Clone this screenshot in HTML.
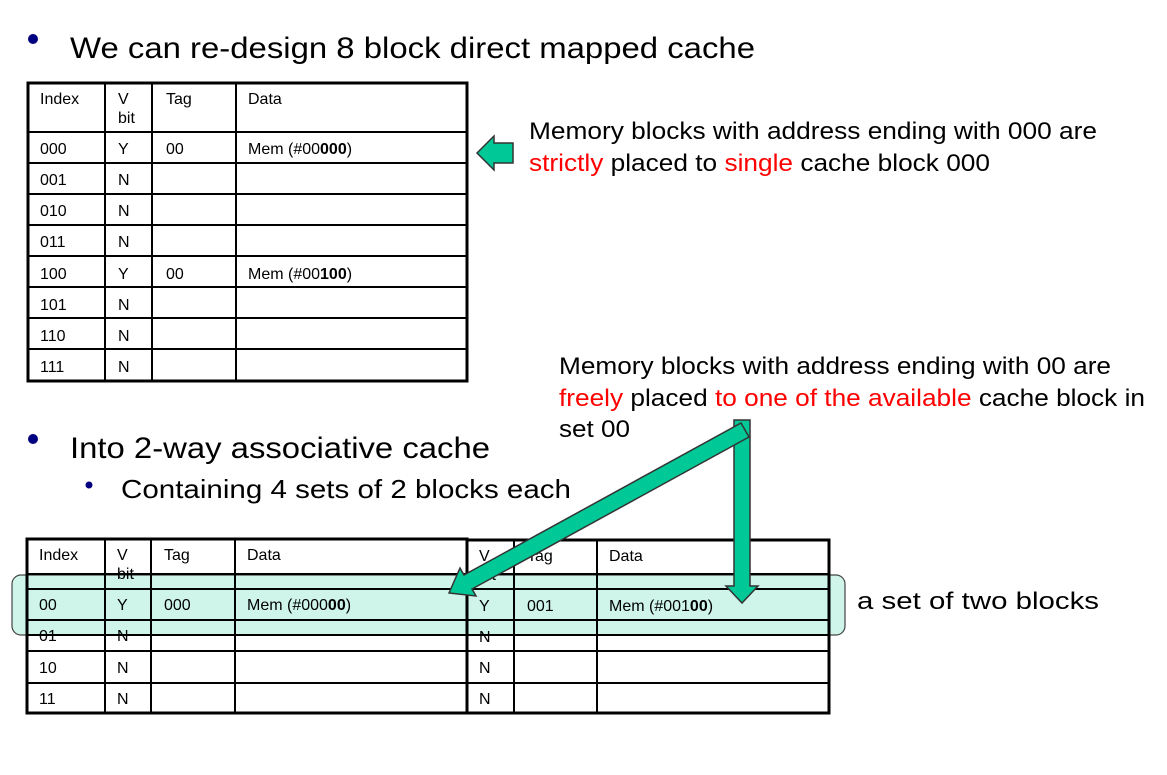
<!DOCTYPE html>
<html><head><meta charset="utf-8"><style>
html,body{margin:0;padding:0;background:#fff;}
body{width:1167px;height:775px;position:relative;overflow:hidden;font-family:"Liberation Sans",Arial,sans-serif;}
svg{position:absolute;left:0;top:0;}
</style></head><body>
<svg width="1167" height="775" viewBox="0 0 1167 775" font-family="Liberation Sans, Arial, sans-serif">
<!-- bullets -->
<circle cx="33" cy="39" r="5" fill="#000080"/>
<text x="70" y="58" font-size="30" textLength="685" lengthAdjust="spacingAndGlyphs">We can re-design 8 block direct mapped cache</text>
<circle cx="33" cy="439" r="5" fill="#000080"/>
<text x="70" y="458" font-size="30" textLength="420" lengthAdjust="spacingAndGlyphs">Into 2-way associative cache</text>
<circle cx="89" cy="485" r="3.5" fill="#000080"/>
<text x="121" y="498" font-size="26" textLength="450" lengthAdjust="spacingAndGlyphs">Containing 4 sets of 2 blocks each</text>

<!-- top table -->
<g stroke="#000" fill="none">
<rect x="28" y="83" width="439" height="298" stroke-width="3"/>
<g stroke-width="2">
<line x1="105" y1="83" x2="105" y2="381"/><line x1="152" y1="83" x2="152" y2="381"/><line x1="236" y1="83" x2="236" y2="381"/>
<line x1="28" y1="132" x2="467" y2="132"/><line x1="28" y1="163" x2="467" y2="163"/><line x1="28" y1="194" x2="467" y2="194"/>
<line x1="28" y1="225" x2="467" y2="225"/><line x1="28" y1="256" x2="467" y2="256"/><line x1="28" y1="287" x2="467" y2="287"/>
<line x1="28" y1="318" x2="467" y2="318"/><line x1="28" y1="349" x2="467" y2="349"/>
</g></g>
<g font-size="16">
<text x="40" y="104">Index</text><text x="118" y="104">V</text><text x="118" y="123">bit</text><text x="166" y="104">Tag</text><text x="248" y="104">Data</text>
<text x="40" y="154">000</text><text x="118" y="154">Y</text><text x="166" y="154">00</text><text x="248" y="154">Mem (#00<tspan font-weight="bold">000</tspan>)</text>
<text x="40" y="185">001</text><text x="118" y="185">N</text>
<text x="40" y="216">010</text><text x="118" y="216">N</text>
<text x="40" y="247">011</text><text x="118" y="247">N</text>
<text x="40" y="279">100</text><text x="118" y="279">Y</text><text x="166" y="279">00</text><text x="248" y="279">Mem (#00<tspan font-weight="bold">100</tspan>)</text>
<text x="40" y="310">101</text><text x="118" y="310">N</text>
<text x="40" y="341">110</text><text x="118" y="341">N</text>
<text x="40" y="372">111</text><text x="118" y="372">N</text>
</g>

<!-- small arrow -->
<polygon points="477,153 494,136 494,143 513,143 513,163 494,163 494,170" fill="#00c896" stroke="#333" stroke-width="1.5"/>

<g font-size="24">
<text x="529" y="139" textLength="568" lengthAdjust="spacingAndGlyphs">Memory blocks with address ending with 000 are</text>
<text x="529" y="171" textLength="461" lengthAdjust="spacingAndGlyphs"><tspan fill="#f00">strictly</tspan> placed to <tspan fill="#f00">single</tspan> cache block 000</text>
<text x="559" y="374" textLength="552" lengthAdjust="spacingAndGlyphs">Memory blocks with address ending with 00 are</text>
<text x="559" y="406" textLength="586" lengthAdjust="spacingAndGlyphs"><tspan fill="#f00">freely</tspan> placed <tspan fill="#f00">to one of the available</tspan> cache block in</text>
<text x="559" y="437" textLength="71" lengthAdjust="spacingAndGlyphs">set 00</text>
<text x="857" y="609" textLength="242" lengthAdjust="spacingAndGlyphs">a set of two blocks</text>
</g>

<!-- highlight band -->
<rect x="12" y="575" width="833" height="60" rx="9" fill="#cff5ea" stroke="#444" stroke-width="1.2"/>

<!-- bottom tables -->
<g stroke="#000" fill="none">
<rect x="27" y="539" width="440" height="174" stroke-width="3"/>
<rect x="467" y="540" width="362" height="173" stroke-width="3"/>
<g stroke-width="2">
<line x1="105" y1="539" x2="105" y2="713"/><line x1="151" y1="539" x2="151" y2="713"/><line x1="235" y1="539" x2="235" y2="713"/>
<line x1="514" y1="540" x2="514" y2="713"/><line x1="597" y1="540" x2="597" y2="713"/>
<line x1="27" y1="574" x2="829" y2="574"/><line x1="27" y1="589" x2="829" y2="589"/>
<line x1="27" y1="620" x2="829" y2="620"/><line x1="27" y1="635" x2="829" y2="635"/>
<line x1="27" y1="651" x2="829" y2="651"/><line x1="27" y1="683" x2="829" y2="683"/>
</g></g>
<g font-size="16">
<text x="39" y="560">Index</text><text x="117" y="560">V</text><text x="117" y="579">bit</text><text x="164" y="560">Tag</text><text x="247" y="560">Data</text>
<text x="39" y="610">00</text><text x="117" y="610">Y</text><text x="164" y="610">000</text><text x="247" y="610">Mem (#000<tspan font-weight="bold">00</tspan>)</text>
<text x="39" y="641">01</text><text x="117" y="641">N</text>
<text x="39" y="673">10</text><text x="117" y="673">N</text>
<text x="39" y="704">11</text><text x="117" y="704">N</text>
<text x="479" y="561">V</text><text x="479" y="580">bit</text><text x="527" y="561">Tag</text><text x="609" y="561">Data</text>
<text x="479" y="611">Y</text><text x="527" y="611">001</text><text x="609" y="611">Mem (#001<tspan font-weight="bold">00</tspan>)</text>
<text x="479" y="642">N</text><text x="479" y="673">N</text><text x="479" y="704">N</text>
</g>

<!-- down arrow -->
<polygon points="734,420 750,420 750,586 758,586 742,603 726,586 734,586" fill="#00c896" stroke="#333" stroke-width="1.5"/>
<!-- diagonal arrow -->
<polygon points="449,593 460,568 464,575 741,423 749,437 472,589 476,596" fill="#00c896" stroke="#333" stroke-width="1.5"/>
</svg>
</body></html>
